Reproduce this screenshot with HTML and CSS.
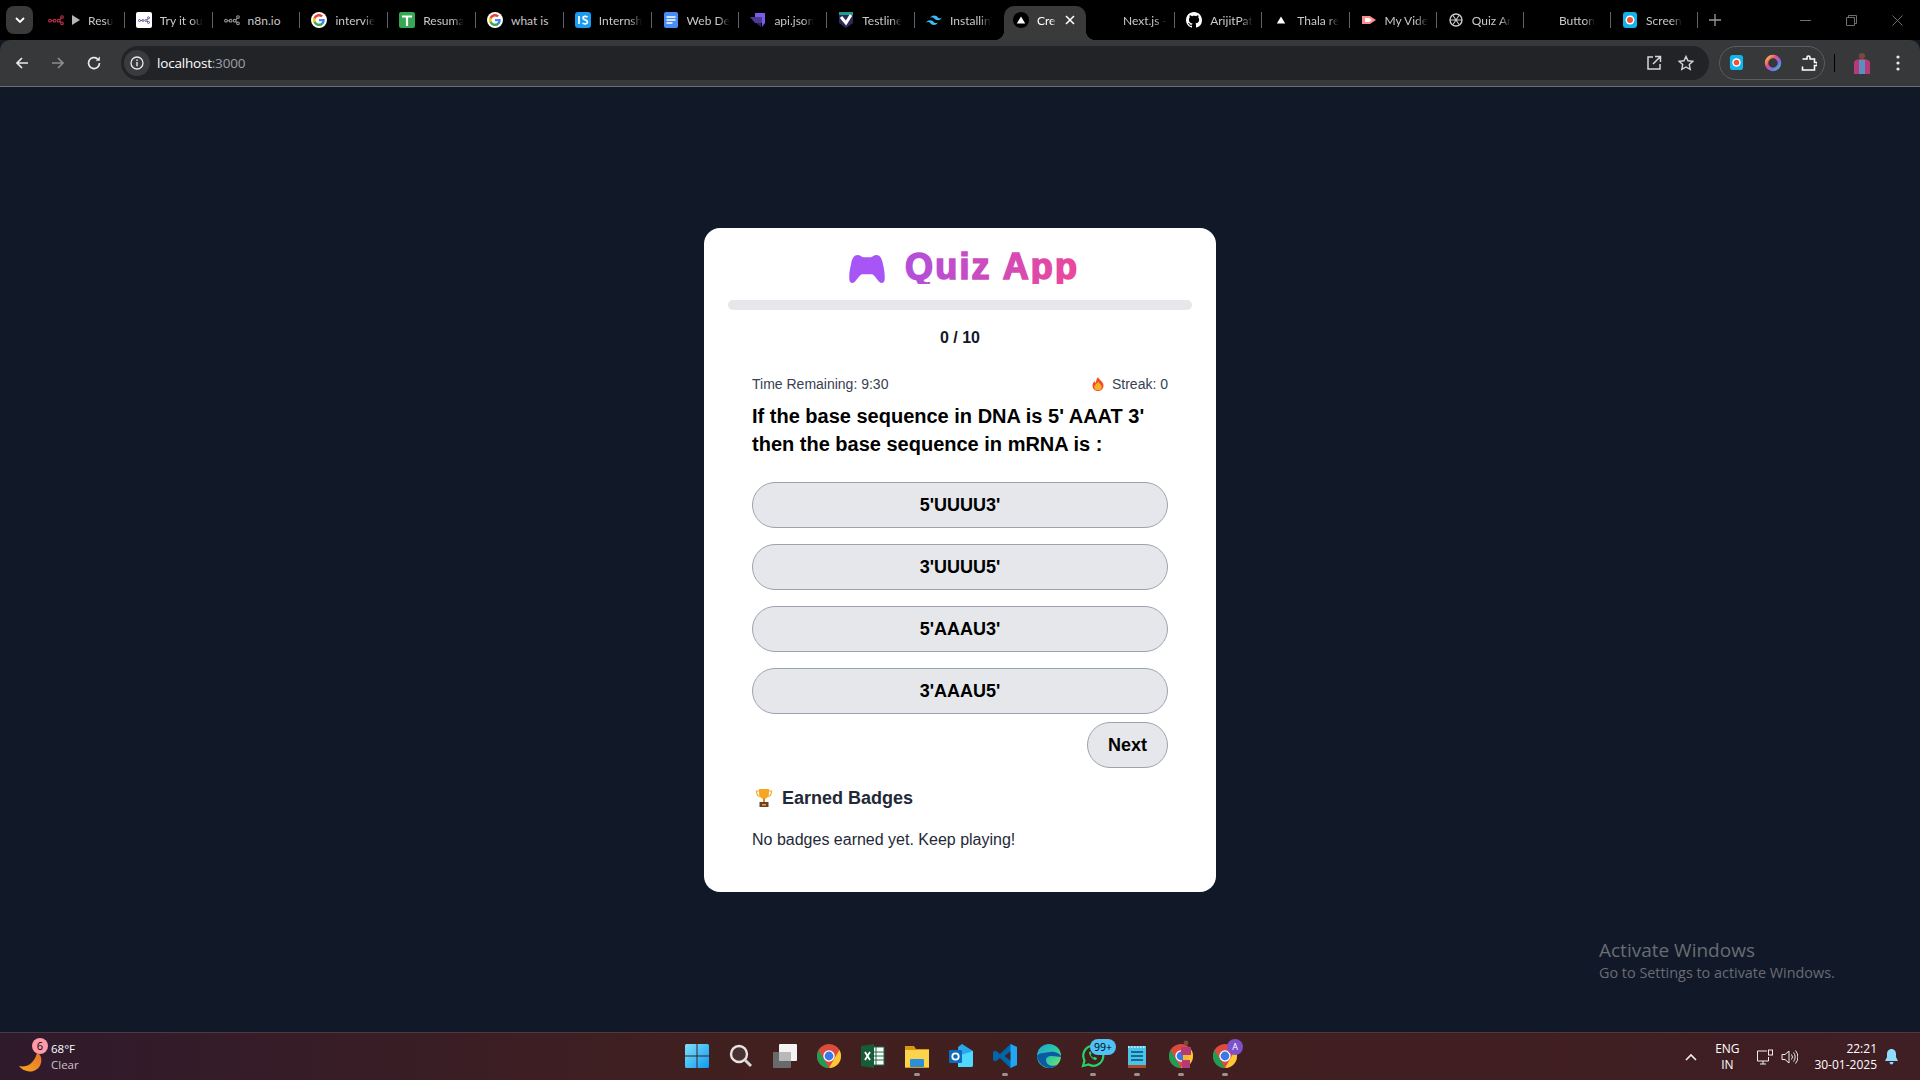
FILE: index.html
```html
<!DOCTYPE html>
<html lang="en">
<head>
  <meta charset="UTF-8" />
  <title>Quiz App</title>
  <link rel="stylesheet" href="styles.css">
</head>
<body>
  <svg class="defs" xmlns="http://www.w3.org/2000/svg">
    <symbol id="google" viewBox="0 0 24 24">
      <circle cx="12" cy="12" r="12" fill="#fff"/>
      <path fill="#4285f4" d="M20.6 12.2c0-.6-.1-1.200-.2-1.800H12v3.400h4.800c-.2 1.100-.8 2-1.800 2.700v2.200h2.900c1.700-1.600 2.700-3.800 2.700-6.500z"/>
      <path fill="#34a853" d="M12 21c2.400 0 4.500-.8 5.900-2.300L15 16.500c-.8.500-1.800.9-3 .9-2.300 0-4.300-1.600-5-3.700H4v2.300C5.500 19 8.500 21 12 21z"/>
      <path fill="#fbbc05" d="M7 13.700c-.4-1.100-.4-2.300 0-3.400V8H4c-1.300 2.500-1.300 5.500 0 8z"/>
      <path fill="#ea4335" d="M12 6.600c1.300 0 2.500.5 3.400 1.300L18 5.400C16.400 3.900 14.300 3 12 3 8.500 3 5.500 5 4 8l3 2.300c.7-2.100 2.700-3.700 5-3.700z"/>
    </symbol>
    <symbol id="chrome" viewBox="0 0 24 24">
      <circle cx="12" cy="12" r="12" fill="#dd4b3e"/>
      <path fill="#1e9e54" d="M12 24C5.400 24 0 18.600 0 12c0-2.200.6-4.200 1.600-6l6 10.400 4.400 7.600z"/>
      <path fill="#fcc934" d="M12 24l6-10.400L22.400 6c1 1.800 1.600 3.800 1.600 6 0 6.600-5.400 12-12 12z"/>
      <circle cx="12" cy="12" r="5.700" fill="#fff"/>
      <circle cx="12" cy="12" r="4.400" fill="#3b78e7"/>
    </symbol>
    <symbol id="n8n" viewBox="0 0 24 16">
      <g fill="none" stroke="currentColor" stroke-width="1.600">
        <circle cx="3" cy="9" r="2"/><circle cx="10" cy="9" r="2"/><circle cx="16" cy="9" r="2"/><circle cx="21" cy="3.500" r="2"/><circle cx="21" cy="13" r="2"/>
        <path d="M5 9h3M18 8l2-3M18 10l2 2"/>
      </g>
    </symbol>
    <symbol id="triangle" viewBox="0 0 16 16">
      <path fill="#fff" d="M8 4.500l4.200 7H3.800z"/>
    </symbol>
  </svg>

  <div class="tab-strip">
    <div class="tab-list-btn">
      <svg width="10" height="6" viewBox="0 0 10 6"><path d="M1 1l4 4 4-4" fill="none" stroke="#fff" stroke-width="1.800"/></svg>
    </div>
    <div class="tab">
      <svg class="fav n8n-red"><use href="#n8n"/></svg>
      <span class="tab-play"></span>
      <span class="tab-title">Resu</span>
    </div>
    <div class="tab">
      <svg class="fav" viewBox="0 0 16 16"><rect width="16" height="16" rx="2" fill="#fff"/><svg x="2" y="3" width="12" height="10" color="#3b3b8f"><use href="#n8n"/></svg></svg>
      <span class="tab-title">Try it ou</span>
    </div>
    <div class="tab">
      <svg class="fav n8n-grey"><use href="#n8n"/></svg>
      <span class="tab-title plain">n8n.io</span>
    </div>
    <div class="tab">
      <svg class="fav"><use href="#google"/></svg>
      <span class="tab-title">intervie</span>
    </div>
    <div class="tab">
      <svg class="fav" viewBox="0 0 16 16"><rect width="16" height="16" rx="2" fill="#34a853"/><path d="M3 4.500h10M8 4.500V14" stroke="#fff" stroke-width="2.200"/></svg>
      <span class="tab-title">Resuma</span>
    </div>
    <div class="tab">
      <svg class="fav"><use href="#google"/></svg>
      <span class="tab-title plain">what is</span>
    </div>
    <div class="tab">
      <svg class="fav" viewBox="0 0 16 16"><rect width="16" height="16" rx="3" fill="#1a9cf0"/><path d="M4 4v8M12.500 5.200C11 3.800 8 4 8 6s4.500 1.800 4.500 4-3.500 2.400-5 1" fill="none" stroke="#fff" stroke-width="1.700"/></svg>
      <span class="tab-title">Internsh</span>
    </div>
    <div class="tab">
      <svg class="fav" viewBox="0 0 16 16"><rect x="1" width="14" height="16" rx="2" fill="#4a8cf7"/><path d="M3.500 5h9M3.500 8h9M3.500 11h6" stroke="#fff" stroke-width="1.500"/></svg>
      <span class="tab-title">Web De</span>
    </div>
    <div class="tab">
      <svg class="fav" viewBox="0 0 16 16"><path fill="#7c5ce6" d="M5 1h10v10l-3 4V5H5z"/><path fill="#4b3a96" d="M0 5h12v6H5z"/><path fill="#2f2566" d="M6 11h5v4z"/></svg>
      <span class="tab-title">api.json</span>
    </div>
    <div class="tab">
      <svg class="fav" viewBox="0 0 16 16"><path fill="#2d2a5c" d="M1 1h14v10l-7 5-7-5z"/><path fill="#1f9c8d" d="M1 0h14v3H1z"/><path d="M3 5l5 6 5-8" fill="none" stroke="#fff" stroke-width="3"/></svg>
      <span class="tab-title">Testline</span>
    </div>
    <div class="tab before-active">
      <svg class="fav" viewBox="0 0 16 16"><path fill="#38bdf8" d="M8 3.500C6 3.500 4.700 4.500 4 6.500c.8-1 1.700-1.400 2.800-1.100.6.200 1 .600 1.500 1.100.8.800 1.700 1.700 3.700 1.700 2 0 3.300-1 4-3-.8 1-1.700 1.400-2.800 1.100-.6-.2-1-.6-1.500-1.100C11 4.400 10 3.500 8 3.500zM4 8.200c-2 0-3.300 1-4 3 .8-1 1.700-1.400 2.800-1.100.6.200 1 .6 1.500 1.100.8.800 1.700 1.700 3.700 1.700 2 0 3.300-1 4-3-.8 1-1.700 1.400-2.800 1.100-.6-.2-1-.6-1.500-1.100C7 9.100 6 8.200 4 8.200z"/></svg>
      <span class="tab-title">Installin</span>
    </div>
    <div class="tab active">
      <svg class="fav" viewBox="0 0 16 16"><circle cx="8" cy="8" r="8" fill="#000"/><use href="#triangle"/></svg>
      <span class="tab-title active-title">Cre</span>
      <svg class="tab-close" width="10" height="10" viewBox="0 0 10 10"><path d="M1 1l8 8M9 1l-8 8" stroke="#fff" stroke-width="1.600"/></svg>
    </div>
    <div class="tab">
      <span class="fav"></span>
      <span class="tab-title">Next.js -</span>
    </div>
    <div class="tab">
      <svg class="fav" viewBox="0 0 16 16"><path fill="#fff" d="M8 0C3.580 0 0 3.580 0 8c0 3.540 2.290 6.530 5.470 7.590.4.070.55-.17.55-.38 0-.19-.01-.82-.01-1.490-2.010.37-2.530-.49-2.690-.94-.09-.23-.48-.94-.82-1.130-.28-.15-.68-.52-.01-.53.630-.01 1.080.58 1.230.82.720 1.210 1.870.87 2.330.66.070-.52.280-.87.510-1.070-1.780-.2-3.640-.89-3.640-3.950 0-.87.310-1.590.820-2.150-.08-.2-.36-1.020.08-2.120 0 0 .67-.21 2.200.820.640-.18 1.320-.27 2-.27s1.360.09 2 .27c1.530-1.040 2.200-.82 2.200-.82.440 1.100.160 1.920.080 2.120.510.560.820 1.270.820 2.150 0 3.070-1.870 3.750-3.650 3.950.290.250.540.730.540 1.480 0 1.070-.01 1.930-.01 2.200 0 .210.150.460.550.380A8.010 8.010 0 0 0 16 8c0-4.420-3.580-8-8-8z"/></svg>
      <span class="tab-title">ArijitPat</span>
    </div>
    <div class="tab">
      <svg class="fav"><use href="#triangle"/></svg>
      <span class="tab-title">Thala re</span>
    </div>
    <div class="tab">
      <svg class="fav" viewBox="0 0 16 16"><path fill="#ff8a8a" d="M1 4h8l6 4-6 4H1z"/><path fill="#fff" d="M4 6h4l3 2-3 2H4z"/></svg>
      <span class="tab-title">My Vide</span>
    </div>
    <div class="tab">
      <svg class="fav" viewBox="0 0 16 16"><circle cx="8" cy="8" r="6" fill="none" stroke="#ccc" stroke-width="1.400"/><path d="M5 3.500l6 9M11 3.500l-6 9M2 8h12" stroke="#ccc" stroke-width="1.100"/></svg>
      <span class="tab-title">Quiz Ar</span>
    </div>
    <div class="tab">
      <span class="fav"></span>
      <span class="tab-title">Button</span>
    </div>
    <div class="tab">
      <svg class="fav" viewBox="0 0 16 16"><rect x="1" width="14" height="16" rx="3" fill="#12b5ea"/><circle cx="8" cy="8" r="4.500" fill="#fff"/><circle cx="8" cy="8" r="3" fill="#f4502f"/></svg>
      <span class="tab-title">Screen</span>
    </div>
    <svg class="new-tab" width="12" height="12" viewBox="0 0 12 12"><path d="M6 0v12M0 6h12" stroke="#9a9a9a" stroke-width="1.300"/></svg>
    <div class="window-controls">
      <span class="win-btn"><svg width="11" height="11" viewBox="0 0 11 11"><path d="M0 5.500h11" stroke="#6e6e6e"/></svg></span>
      <span class="win-btn"><svg width="11" height="11" viewBox="0 0 11 11"><path d="M.5 2.500h8v8h-8zM2.500 2.500V.5h8v8h-2" fill="none" stroke="#6e6e6e"/></svg></span>
      <span class="win-btn"><svg width="11" height="11" viewBox="0 0 11 11"><path d="M.5.500l10 10M10.500.500l-10 10" stroke="#6e6e6e"/></svg></span>
    </div>
  </div>

  <div class="toolbar">
    <span class="nav-btn"><svg width="16" height="16" viewBox="0 0 16 16"><path d="M14 8H3M8 3L3 8l5 5" fill="none" stroke="#e8eaed" stroke-width="1.700"/></svg></span>
    <span class="nav-btn"><svg width="16" height="16" viewBox="0 0 16 16"><path d="M2 8h11M8 3l5 5-5 5" fill="none" stroke="#8b8d90" stroke-width="1.700"/></svg></span>
    <span class="nav-btn"><svg width="16" height="16" viewBox="0 0 16 16"><path d="M13.500 8A5.500 5.500 0 1 1 11.500 3.800" fill="none" stroke="#e8eaed" stroke-width="1.700"/><path d="M13.800 1.500v4.200H9.600z" fill="#e8eaed"/></svg></span>
    <div class="omnibox">
      <span class="site-info">
        <svg width="14" height="14" viewBox="0 0 14 14"><circle cx="7" cy="7" r="6" fill="none" stroke="#e8eaed" stroke-width="1.300"/><path d="M7 6v4.200M7 3.600v1.400" stroke="#e8eaed" stroke-width="1.400"/></svg>
      </span>
      <span class="url">localhost<span class="url-port">:3000</span></span>
      <svg class="omni-icon" width="16" height="16" viewBox="0 0 16 16"><path d="M7 2H2v12h12V9M9 1.500h5.500V7M14 2L7 9" fill="none" stroke="#d5d7da" stroke-width="1.500"/></svg>
      <svg class="omni-icon" width="16" height="16" viewBox="0 0 16 16"><path d="M8 1.500l2 4.300 4.700.6-3.400 3.200.9 4.700L8 12l-4.200 2.300.9-4.700L1.300 6.400 6 5.800z" fill="none" stroke="#d5d7da" stroke-width="1.400"/></svg>
    </div>
    <div class="ext-pill">
      <svg width="15" height="15" viewBox="0 0 16 16"><rect x="1" width="14" height="16" rx="3" fill="#12b5ea"/><circle cx="8" cy="8" r="4.500" fill="#fff"/><circle cx="8" cy="8" r="3" fill="#f4502f"/></svg>
      <svg width="18" height="18" viewBox="0 0 18 18"><defs><linearGradient id="ring" x1="0" y1="0" x2="1" y2="1"><stop offset="0" stop-color="#f8c93e"/><stop offset=".35" stop-color="#ef4f7f"/><stop offset=".7" stop-color="#7c6cf0"/><stop offset="1" stop-color="#36c6a8"/></linearGradient></defs><circle cx="9" cy="9" r="6.500" fill="none" stroke="url(#ring)" stroke-width="3.500"/></svg>
      <svg width="16" height="16" viewBox="0 0 16 16"><path d="M1.500 4H6V2.500a1.500 1.500 0 0 1 3 0V4h4.500v3.500H15a1.500 1.500 0 0 1 0 3h-1.500V15H1.500v-3.500" fill="none" stroke="#fff" stroke-width="1.600"/></svg>
    </div>
    <span class="toolbar-sep"></span>
    <svg class="avatar" width="18" height="22" viewBox="0 0 18 22"><path fill="#b73a78" d="M1 22V11c0-3 3-4 8-4s8 1 8 4v11z"/><path fill="#5b8fc0" d="M6 8h6v14H6z"/><circle cx="9" cy="4" r="3" fill="#7a4a36"/></svg>
    <svg class="menu-dots" width="4" height="16" viewBox="0 0 4 16"><circle cx="2" cy="2" r="1.600" fill="#e8eaed"/><circle cx="2" cy="8" r="1.600" fill="#e8eaed"/><circle cx="2" cy="14" r="1.600" fill="#e8eaed"/></svg>
  </div>

  <main class="page">
    <div class="card">
      <h1 class="title">
        <svg class="title-icon" width="36" height="28" viewBox="0 0 106 83"><path fill="#a855f7" d="M25 0C33 0 36 5 42 7H64C70 5 73 0 81 0C91 0 97 10 100 25C104 42 107 60 105 75C104 83 95 85 90 80C82 72 76 60 68 57H38C30 60 24 72 16 80C11 85 2 83 1 75C-1 60 2 42 6 25C9 10 15 0 25 0Z"/></svg>
        <svg class="title-text" width="178" height="48">
          <defs>
            <linearGradient id="title-grad" x1="0" y1="0" x2="1" y2="0"><stop offset="0" stop-color="#b14fdc"/><stop offset="1" stop-color="#ec4899"/></linearGradient>
            <clipPath id="title-clip"><rect width="178" height="40"/></clipPath>
          </defs>
          <text x="1" y="34.500" clip-path="url(#title-clip)" fill="url(#title-grad)" stroke="url(#title-grad)" stroke-width="1.600">Quiz App</text>
        </svg>
      </h1>
      <div class="progress"></div>
      <p class="score">0 / 10</p>

      <section class="quiz">
        <div class="status-row">
          <span>Time Remaining: 9:30</span>
          <span class="streak">
            <svg width="12" height="14" viewBox="0 0 12 14"><path fill="#f0501e" d="M6 0c.5 2.500 5.500 4.500 5.500 8.500C11.500 11.800 9 14 6 14S.5 11.800.5 8.500C.5 6.500 1.700 5 2.500 4c.2 1 .7 1.700 1.300 2C4 4 4.500 2 6 0z"/><path fill="#fbb02d" d="M6 4.500c.4 1.500 3.800 3.300 3.800 5.700C9.800 12 8 13.200 6 13.200s-3.800-1.200-3.800-3C2.200 8.200 5.500 6.500 6 4.500z"/></svg>
            Streak: 0
          </span>
        </div>
        <h2 class="question">If the base sequence in DNA is 5' AAAT 3' then the base sequence in mRNA is :</h2>
        <div class="options">
          <button class="option">5'UUUU3'</button>
          <button class="option">3'UUUU5'</button>
          <button class="option">5'AAAU3'</button>
          <button class="option">3'AAAU5'</button>
        </div>
        <div class="next-row">
          <button class="option next-btn">Next</button>
        </div>
        <h3 class="badges-title">
          <svg width="18" height="18" viewBox="0 0 18 18"><path d="M4 2H1.500c0 3.500 1 5 3.500 5.500M14 2h2.500c0 3.500-1 5-3.500 5.500" fill="none" stroke="#f5a623" stroke-width="1.200"/><path fill="#f5a623" d="M4 0h10v4c0 3.500-2.500 6-5 6S4 7.500 4 4z"/><path fill="#d98a12" d="M8 9.500h2V13H8z"/><path fill="#6b3f2a" d="M4.500 13h9v5h-9z"/><path fill="#f5a623" d="M7 15h4v1.500H7z"/></svg>
          Earned Badges
        </h3>
        <p class="no-badges">No badges earned yet. Keep playing!</p>
      </section>
    </div>
    <div class="activate">
      <div class="activate-title">Activate Windows</div>
      <div class="activate-sub">Go to Settings to activate Windows.</div>
    </div>
  </main>

  <footer class="taskbar">
    <div class="weather">
      <div class="moon-wrap">
        <svg width="24" height="24" viewBox="0 0 24 24"><defs><linearGradient id="moon" x1="0" y1="1" x2="1" y2="0"><stop offset="0" stop-color="#f7a81f"/><stop offset="1" stop-color="#e8702a"/></linearGradient></defs><path fill="url(#moon)" d="M0 17c7 2 15-2 18-13 4 1 5 6 4 10-1.500 6-7 9-12 8.500C6 22 2 20 0 17z"/></svg>
        <span class="weather-badge">6</span>
      </div>
      <div class="weather-text">
        <div class="temp">68°F</div>
        <div class="cond">Clear</div>
      </div>
    </div>
    <div class="task-icons">
      <span class="task-icon">
        <svg width="24" height="24" viewBox="0 0 24 24"><defs><linearGradient id="win" x1="0" y1="0" x2="1" y2="1"><stop offset="0" stop-color="#7fe0fb"/><stop offset="1" stop-color="#0d9af0"/></linearGradient></defs><path fill="url(#win)" d="M0 1.500A1.500 1.500 0 0 1 1.500 0h10v11.500H0zM12.500 0H22.500A1.500 1.500 0 0 1 24 1.500v10H12.500zM0 12.500h11.500V24H1.500A1.500 1.500 0 0 1 0 22.500zM12.500 12.500H24v10a1.500 1.500 0 0 1-1.500 1.500H12.500z"/></svg>
      </span>
      <span class="task-icon">
        <svg width="24" height="24" viewBox="0 0 24 24"><circle cx="10" cy="10" r="8" fill="#4a3232" stroke="#e8e4e4" stroke-width="2.400"/><path d="M16 16l6 6" stroke="#d8d4d4" stroke-width="3"/></svg>
      </span>
      <span class="task-icon">
        <svg width="24" height="24" viewBox="0 0 24 24"><rect x="0" y="8" width="18" height="16" rx="1" fill="#6a6a6a"/><rect x="6" y="0" width="18" height="17" rx="1" fill="#f3f3f3"/><rect x="6" y="8" width="12" height="9" fill="#b8b8b8"/></svg>
      </span>
      <span class="task-icon"><svg width="24" height="24"><use href="#chrome"/></svg></span>
      <span class="task-icon">
        <svg width="24" height="24" viewBox="0 0 24 24"><rect x="8" y="3" width="15" height="18" fill="#fff" stroke="#1d6f42"/><path d="M15 3v18M9 8h14M9 12h14M9 16h14" stroke="#1d6f42"/><path fill="#185c37" d="M0 2l13-2v24L0 22z"/><path d="M4 8l5 8M9 8l-5 8" stroke="#fff" stroke-width="1.800"/></svg>
      </span>
      <span class="task-icon">
        <svg width="24" height="24" viewBox="0 0 24 24"><path fill="#d99a12" d="M0 2h9l2 3h13v19H0z"/><rect y="6" width="24" height="17" fill="#fcd34d"/><rect x="5" y="15" width="14" height="8" rx="1" fill="#2a8fd8"/></svg>
      </span>
      <span class="task-icon">
        <svg width="24" height="24" viewBox="0 0 24 24"><path fill="#28a8ea" d="M13 0l11 7v14a2 2 0 0 1-2 2H9V3z"/><path fill="#50d9ff" d="M9 12l15-5v14a2 2 0 0 1-2 2H9z"/><rect y="6" width="13" height="13" rx="1" fill="#0f6cbd"/><circle cx="6.500" cy="12.500" r="3.200" fill="none" stroke="#fff" stroke-width="1.800"/></svg>
      </span>
      <span class="task-icon">
        <svg width="24" height="24" viewBox="0 0 24 24"><path fill="#0065a9" d="M17.500 0L7 10 2.500 6.500 0 8v8l2.500 1.500L7 14l10.500 10 6.500-3V3zM18 7v10l-6.500-5z"/><path fill="#1fa8f1" d="M17.500 0L24 3v18l-6.500 3z"/></svg>
      </span>
      <span class="task-icon">
        <svg width="24" height="24" viewBox="0 0 24 24"><defs><linearGradient id="edge" x1="0" y1="0" x2="1" y2="1"><stop offset="0" stop-color="#1ba5d8"/><stop offset=".5" stop-color="#2bc7a8"/><stop offset="1" stop-color="#7fe06a"/></linearGradient></defs><circle cx="12" cy="12" r="12" fill="url(#edge)"/><path fill="#0c59a4" d="M0 12C1 19 7 24 13 24c3 0 5-1 7-3-5 2-11 0-11-5 0-3 3-4 5-4 4 0 8 1 10 1 0-1 0-1 0-1-1-2-6-5-11-4C6 9 1 9 0 12z"/></svg>
      </span>
      <span class="task-icon">
        <svg width="24" height="24" viewBox="0 0 24 24"><path d="M2 22l1.500-5.500A10 10 0 1 1 7.500 20.500z" fill="none" stroke="#25d366" stroke-width="2.200"/><path d="M8.500 7.500c-1 1-.5 3 1.500 5.500s4.500 3.500 5.500 2.500l.5-1.500-2.500-1.200-1 1c-1-.4-2.300-1.800-2.800-3l1-1L9.500 7.500z" fill="#25d366"/></svg>
        <span class="count-badge">99+</span>
      </span>
      <span class="task-icon">
        <svg width="24" height="24" viewBox="0 0 24 24"><rect x="3" y="2" width="18" height="20" fill="#4cc2e8"/><path d="M3 3h18" stroke="#bdeaf8" stroke-width="2" stroke-dasharray="1.500 1.500"/><path d="M6 8h12M6 12h12M6 16h12" stroke="#0f6c92" stroke-width="2"/><rect x="3" y="21" width="18" height="3" fill="#a34e24"/></svg>
      </span>
      <span class="task-icon">
        <svg width="24" height="24"><use href="#chrome"/></svg>
        <svg class="pin-avatar" width="12" height="28" viewBox="0 0 12 28"><circle cx="6" cy="3" r="2.400" fill="#7a4a36"/><path fill="#b73a78" d="M1 7h10v8H1z"/><path fill="#f4b92c" d="M3 15h6v5H3z"/><path fill="#b73a78" d="M2 20h8v8H2z"/></svg>
      </span>
      <span class="task-icon">
        <svg width="24" height="24"><use href="#chrome"/></svg>
        <span class="profile-badge">A</span>
      </span>
    </div>
    <div class="tray">
      <svg width="12" height="8" viewBox="0 0 12 8"><path d="M1 7l5-5 5 5" fill="none" stroke="#f0f0f0" stroke-width="1.600"/></svg>
      <div class="lang"><div>ENG</div><div>IN</div></div>
      <svg class="tray-net" width="16" height="16" viewBox="0 0 16 16"><path d="M10 2H.500v10h11V8M6 12v3M3 15h6" fill="none" stroke="#f0f0f0"/><rect x="11.500" y="1" width="4" height="5" fill="none" stroke="#f0f0f0"/></svg>
      <svg class="tray-vol" width="17" height="16" viewBox="0 0 17 16"><path d="M1 5.500h3l4-3.500v12l-4-3.500H1z M10.500 5.500a4 4 0 0 1 0 5M12.500 3.500a7 7 0 0 1 0 9M14.500 1.500a10 10 0 0 1 0 13" fill="none" stroke="#f0f0f0"/></svg>
      <div class="clock"><div>22:21</div><div>30-01-2025</div></div>
      <svg class="bell" width="13" height="16" viewBox="0 0 13 16"><path fill="#8fdcff" d="M6.500 0C9.500 0 11 2.500 11 5v3l2 4H0l2-4V5c0-2.500 1.500-5 4.500-5zM4.500 13h4c0 1.500-1 2.500-2 2.500s-2-1-2-2.500z"/></svg>
    </div>
  </footer>
</body>
</html>
```

FILE: styles.css
```css
html, body {
  height: 100%;
}

body {
  margin: 0;
  display: flex;
  flex-direction: column;
  height: 1080px;
  overflow: hidden;
  background: #111827;
  font-family: "Liberation Sans", Arial, sans-serif;
}

.defs {
  display: none;
}

/* browser tabs */
.tab-strip {
  display: flex;
  align-items: center;
  height: 40px;
  padding-left: 6px;
  background: #000;
  font-family: Lato, sans-serif;
  font-size: 12px;
  color: #c9c9c9;
}

.tab-list-btn {
  display: flex;
  align-items: center;
  justify-content: center;
  width: 27px;
  height: 28px;
  margin-right: 4px;
  border-radius: 8px;
  background: #3a3a3a;
}

.tab {
  display: flex;
  align-items: center;
  gap: 8px;
  box-sizing: border-box;
  width: 87.800px;
  height: 16px;
  padding: 0 6px 0 11px;
  border-right: 1px solid #5f6368;
}

.tab.before-active {
  width: 89px;
  border-right: 0;
}

.tab.active ~ .tab {
  width: 87.200px;
}

.fav {
  flex: none;
  display: block;
  width: 16px;
  height: 16px;
}

.n8n-red {
  color: #c9304c;
}

.n8n-grey {
  color: #9a9a9a;
}

.tab-play {
  flex: none;
  width: 0;
  height: 0;
  border-left: 8px solid #b5b5b5;
  border-top: 5px solid transparent;
  border-bottom: 5px solid transparent;
}

.tab-title {
  white-space: nowrap;
  -webkit-mask-image: linear-gradient(to right, #000 72%, transparent);
  mask-image: linear-gradient(to right, #000 72%, transparent);
}

.tab-title.plain {
  -webkit-mask-image: none;
  mask-image: none;
}

.tab-title.active-title {
  flex: 1;
  min-width: 0;
}

.tab.active {
  position: relative;
  align-self: flex-end;
  width: 82px;
  height: 34px;
  margin-right: 2px;
  padding: 0 11px 6px 9px;
  border: 0;
  border-radius: 10px 10px 0 0;
  background: #3a3a3a;
  color: #fff;
}

.tab.active::before,
.tab.active::after {
  content: "";
  position: absolute;
  bottom: 0;
  width: 10px;
  height: 10px;
}

.tab.active::before {
  left: -10px;
  background: radial-gradient(circle at 0 0, transparent 10px, #3a3a3a 10.500px);
}

.tab.active::after {
  right: -10px;
  background: radial-gradient(circle at 100% 0, transparent 10px, #3a3a3a 10.500px);
}

.tab-close {
  flex: none;
}

.new-tab {
  margin-left: 11px;
}

.window-controls {
  display: flex;
  margin-left: auto;
}

.win-btn {
  display: flex;
  align-items: center;
  justify-content: center;
  width: 46px;
  height: 40px;
}

/* address bar */
.toolbar {
  display: flex;
  align-items: center;
  box-sizing: border-box;
  height: 47px;
  padding: 0 0 1px 4px;
  border-bottom: 1px solid #6a6c70;
  border-radius: 10px 10px 0 0;
  background: #37383a;
}

.nav-btn {
  display: flex;
  align-items: center;
  justify-content: center;
  width: 36px;
}

.omnibox {
  display: flex;
  align-items: center;
  width: 1588px;
  height: 34px;
  margin-left: 9px;
  border-radius: 17px;
  background: #222327;
}

.site-info {
  display: flex;
  align-items: center;
  justify-content: center;
  width: 26px;
  height: 26px;
  margin-left: 3px;
  border-radius: 50%;
  background: #3a3b3f;
}

.url {
  flex: 1;
  margin-left: 7px;
  font-family: "Open Sans", sans-serif;
  font-size: 13.500px;
  letter-spacing: -0.200px;
  color: #fff;
}

.url-port {
  color: #9aa0a6;
}

.omni-icon {
  margin-right: 16px;
}

.omni-icon:last-child {
  margin-right: 15px;
}

.ext-pill {
  display: flex;
  align-items: center;
  justify-content: space-between;
  box-sizing: border-box;
  width: 106px;
  height: 34px;
  margin-left: 10px;
  padding: 0 7px 0 9px;
  border: 1px solid #5a5c60;
  border-radius: 17px;
}

.toolbar-sep {
  width: 1px;
  height: 18px;
  margin-left: 9px;
  background: #000;
}

.avatar {
  margin-left: 18px;
}

.menu-dots {
  margin-left: 25px;
}

/* quiz page */
.page {
  position: relative;
  flex: 1;
  display: flex;
  align-items: center;
  justify-content: center;
}

.card {
  box-sizing: border-box;
  width: 512px;
  height: 664px;
  padding: 16px 24px;
  border-radius: 16px;
  background: #fff;
}

.title {
  display: flex;
  align-items: flex-start;
  justify-content: center;
  gap: 19px;
  height: 40px;
  margin: 0;
  padding-left: 10px;
}

.title-icon {
  flex: none;
  margin-top: 11px;
}

.title-text {
  flex: none;
}

.title-text text {
  font-family: "Liberation Sans", Arial, sans-serif;
  font-size: 36px;
  font-weight: bold;
  letter-spacing: 2.200px;
}

.progress {
  height: 10px;
  margin-top: 16px;
  border-radius: 5px;
  background: #e5e7eb;
}

.score {
  margin: 16px 0 0;
  font-size: 16px;
  line-height: 24px;
  font-weight: bold;
  text-align: center;
  color: #111827;
}

.quiz {
  padding: 0 24px;
}

.status-row {
  display: flex;
  justify-content: space-between;
  margin-top: 24px;
  font-size: 14px;
  line-height: 20px;
  color: #374151;
}

.streak {
  display: flex;
  align-items: center;
  gap: 8px;
}

.question {
  margin: 8px 0 0;
  font-size: 20px;
  line-height: 28px;
  color: #000;
}

.options {
  display: flex;
  flex-direction: column;
  gap: 16px;
  margin-top: 24px;
}

.option {
  box-sizing: border-box;
  width: 100%;
  height: 46px;
  padding: 1px 0 0;
  border: 1px solid #9ca3af;
  border-radius: 23px;
  background: #e5e7eb;
  font-family: inherit;
  font-size: 18px;
  font-weight: bold;
  color: #000;
  cursor: pointer;
}

.next-row {
  display: flex;
  justify-content: flex-end;
  margin-top: 8px;
}

.next-btn {
  width: 81px;
}

.badges-title {
  display: flex;
  align-items: center;
  gap: 9px;
  margin: 16px 0 0;
  padding-left: 3px;
  font-size: 18px;
  line-height: 28px;
  color: #1f2937;
}

.no-badges {
  margin: 16px 0 0;
  font-size: 16px;
  line-height: 24px;
  color: #1f2937;
}

.activate {
  position: absolute;
  left: 1599px;
  top: 849px;
  font-family: "Open Sans", sans-serif;
  color: #686d75;
}

.activate-title {
  font-size: 19px;
  line-height: 28px;
}

.activate-sub {
  font-size: 14.400px;
  line-height: 18px;
}

/* windows taskbar */
.taskbar {
  display: grid;
  grid-template-columns: 1fr auto 1fr;
  align-items: center;
  box-sizing: border-box;
  height: 48px;
  border-top: 1px solid #4c3a3e;
  background: linear-gradient(to right, #2f1a2c, #42201f 40%, #3f1e24);
  font-family: "Open Sans", sans-serif;
  font-size: 12px;
  color: #fff;
}

.weather {
  display: flex;
  align-items: center;
  gap: 8px;
  padding-left: 19px;
}

.moon-wrap {
  position: relative;
  width: 24px;
  height: 24px;
  margin-top: 8px;
}

.weather-badge {
  position: absolute;
  top: -11px;
  right: -5px;
  width: 16px;
  height: 16px;
  border-radius: 50%;
  background: #ff9aa8;
  font-size: 11px;
  line-height: 16px;
  text-align: center;
  color: #000;
}

.weather-text {
  font-size: 11.500px;
  line-height: 16px;
}

.cond {
  color: #c9c4c6;
}

.task-icons {
  display: flex;
  margin-left: 2px;
}

.task-icon {
  position: relative;
  display: flex;
  align-items: center;
  justify-content: center;
  width: 44px;
  height: 46px;
  margin-bottom: 1px;
}

.task-icon:nth-child(6)::after,
.task-icon:nth-child(8)::after,
.task-icon:nth-child(10)::after,
.task-icon:nth-child(11)::after,
.task-icon:nth-child(12)::after,
.task-icon:nth-child(13)::after {
  content: "";
  position: absolute;
  left: 19px;
  bottom: 3px;
  width: 6px;
  height: 3px;
  border-radius: 2px;
  background: #9c9293;
}

.count-badge {
  position: absolute;
  top: 6px;
  left: 19px;
  width: 26px;
  height: 16px;
  border-radius: 8px;
  background: #4fc3f7;
  font-size: 10.500px;
  line-height: 16px;
  text-align: center;
  color: #000;
}

.pin-avatar {
  position: absolute;
  top: 7px;
  left: 21px;
}

.profile-badge {
  position: absolute;
  top: 6px;
  left: 24px;
  width: 16px;
  height: 16px;
  border-radius: 50%;
  background: #7b52c9;
  font-size: 9px;
  line-height: 16px;
  text-align: center;
}

.tray {
  display: flex;
  align-items: center;
  justify-content: flex-end;
  padding-right: 22px;
}

.lang {
  width: 32px;
  margin-left: 14px;
  line-height: 16px;
  text-align: center;
  font-size: 12px;
}

.tray-net {
  margin-left: 14px;
}

.tray-vol {
  margin-left: 8px;
}

.clock {
  margin-left: 16px;
  line-height: 16px;
  text-align: right;
  font-size: 12px;
}

.bell {
  margin-left: 8px;
}
```
